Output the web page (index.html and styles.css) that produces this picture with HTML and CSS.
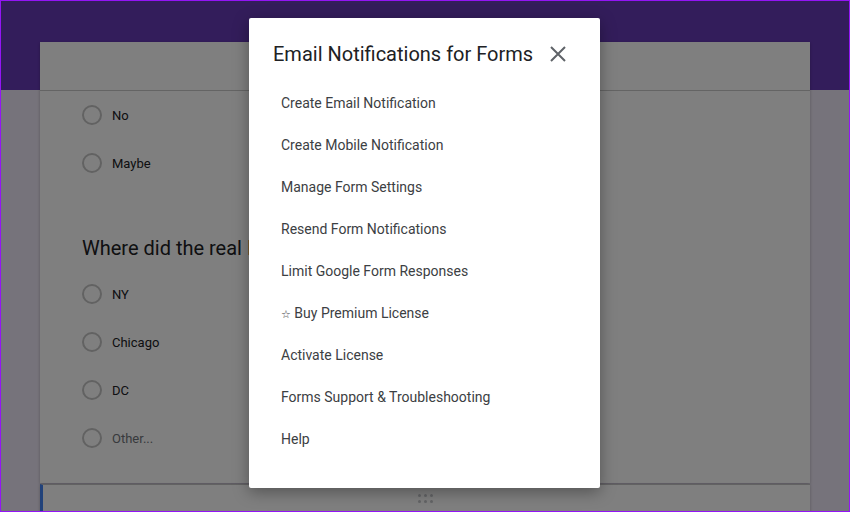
FILE: index.html
```html
<!DOCTYPE html>
<html lang="en">
<head>
    <meta charset="UTF-8">
    <meta name="viewport" content="width=device-width, initial-scale=1.0">
    <title>Form</title>
    <link rel="stylesheet" href="styles.css">
</head>
<body>
    <div class="frame">
        <main class="form">
            <section class="card">
                <div class="card-head"></div>
                <div class="option"><span class="radio"></span><span class="label">No</span></div>
                <div class="option"><span class="radio"></span><span class="label">Maybe</span></div>
                <h2 class="question">Where did the real <span class="hl">H</span>amilton live?</h2>
                <div class="option"><span class="radio"></span><span class="label">NY</span></div>
                <div class="option"><span class="radio"></span><span class="label">Chicago</span></div>
                <div class="option"><span class="radio"></span><span class="label">DC</span></div>
                <div class="option"><span class="radio"></span><span class="label other">Other...</span></div>
            </section>
            <section class="card active">
                <div class="drag">
                    <span></span><span></span><span></span>
                    <span></span><span></span><span></span>
                </div>
            </section>
        </main>
        <div class="scrim"></div>
        <div class="dialog">
            <div class="dialog-head">
                <h1>Email Notifications for Forms</h1>
                <svg class="close" width="16" height="16" viewBox="0 0 16 16">
                    <path d="M1 1 L15 15 M15 1 L1 15" stroke="#5f6368" stroke-width="2" fill="none"/>
                </svg>
            </div>
            <ul class="menu">
                <li>Create Email Notification</li>
                <li>Create Mobile Notification</li>
                <li>Manage Form Settings</li>
                <li>Resend Form Notifications</li>
                <li>Limit Google Form Responses</li>
                <li><span class="star">☆</span> Buy Premium License</li>
                <li>Activate License</li>
                <li>Forms Support &amp; Troubleshooting</li>
                <li>Help</li>
            </ul>
        </div>
    </div>
</body>
</html>
```

FILE: styles.css
```css
body {
    margin: 0;
    padding: 0;
    font-family: Roboto, "Liberation Sans", sans-serif;
}
.frame {
    position: relative;
    box-sizing: border-box;
    width: 850px;
    height: 512px;
    border: 1px solid #9315f5;
    overflow: hidden;
    background: linear-gradient(#673ab7 0, #673ab7 89px, #ede7f6 89px);
}
.form {
    margin: 0 39px;
    padding-top: 41px;
    width: 770px;
}
.card {
    background: #fff;
    box-shadow: 0 1px 3px rgba(0, 0, 0, 0.25);
}
.card-head {
    height: 48px;
    border-bottom: 1px solid #c8c8c8;
}
.option {
    display: flex;
    align-items: center;
    height: 48px;
    padding-left: 42px;
}
.radio {
    box-sizing: border-box;
    width: 20px;
    height: 20px;
    border: 2px solid #c4c4c4;
    border-radius: 50%;
}
.label {
    margin-left: 10px;
    font-size: 13px;
    color: #202124;
}
.label.other {
    color: #70757a;
}
.question {
    margin: 0;
    padding: 47px 0 8px 42px;
    font-size: 20px;
    font-weight: 400;
    line-height: 28px;
    color: #202124;
    white-space: nowrap;
}
.question .hl {
    color: #d4501e;
}
.card:first-child {
    padding-bottom: 21px;
}
.card.active {
    margin-top: 1px;
    height: 40px;
    border-top: 1px solid #c4c4c4;
    border-left: 3px solid #4285f4;
}
.drag {
    display: grid;
    grid-template-columns: repeat(3, 3px);
    gap: 3px 3px;
    width: 15px;
    margin: 9px auto 0;
    padding-right: 3px;
}
.drag span {
    width: 3px;
    height: 3px;
    border-radius: 50%;
    background: #c6c8cc;
}
.scrim {
    position: absolute;
    inset: 0;
    background: rgba(0, 0, 0, 0.5);
}
.dialog {
    position: absolute;
    left: 248px;
    top: 17px;
    width: 351px;
    height: 470px;
    box-sizing: border-box;
    padding-top: 22px;
    background: #fff;
    border-radius: 2px;
    box-shadow: 0 4px 16px rgba(0, 0, 0, 0.35);
}
.dialog-head {
    display: flex;
    justify-content: space-between;
    align-items: center;
    height: 28px;
    padding: 0 34px 0 24px;
}
.dialog-head h1 {
    margin: 0;
    font-size: 20px;
    font-weight: 400;
    color: #202124;
}
.menu {
    list-style: none;
    margin: 14px 0 0;
    padding: 0;
}
.menu li {
    height: 42px;
    line-height: 42px;
    padding-left: 32px;
    font-size: 14px;
    color: #3c4043;
}
.star {
    font-family: "DejaVu Sans", sans-serif;
    font-size: 11px;
}
```
